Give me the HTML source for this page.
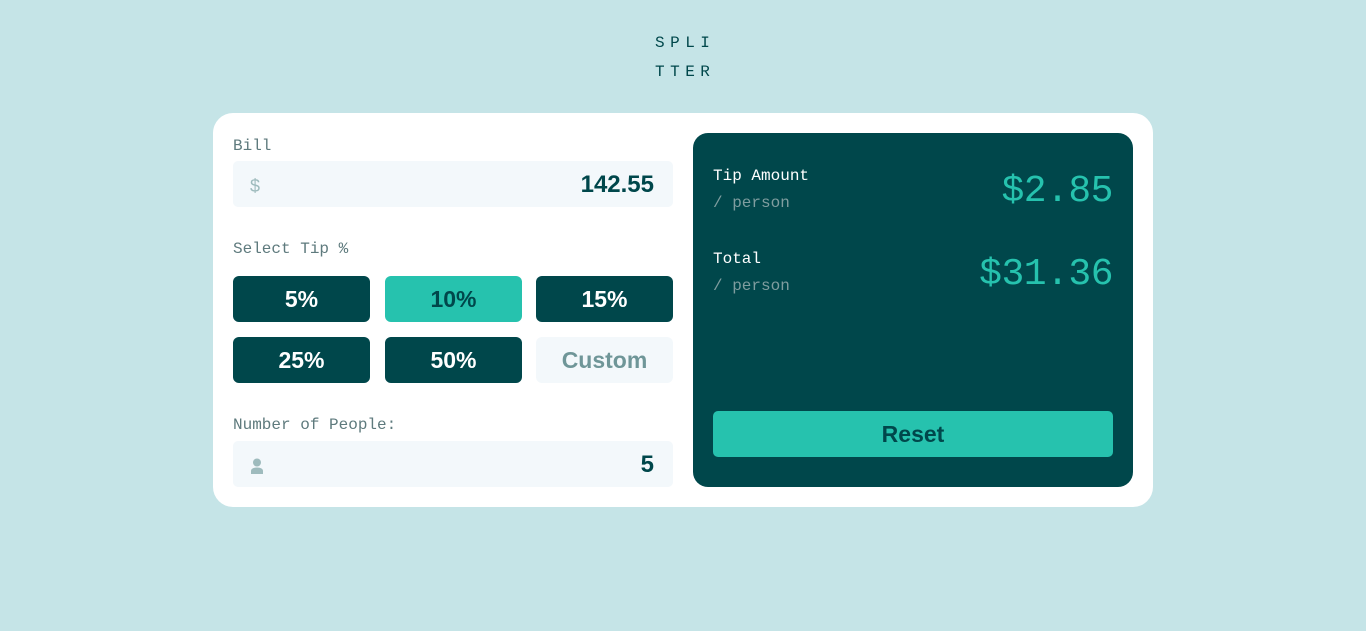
<!DOCTYPE html>
<html><head><style>
*{box-sizing:border-box;margin:0;padding:0}
body{width:1366px;height:631px;background:#c5e4e7;font-family:"Liberation Mono",monospace;position:relative;overflow:hidden}
.logo{position:absolute;left:655px;top:29px;font-size:16px;letter-spacing:5.5px;color:#00474b;line-height:29px;width:80px}
.card{position:absolute;left:213px;top:113px;width:940px;height:394px;background:#fff;border-radius:20px}
.lbl{position:absolute;left:20px;font-size:16px;color:#5e7a7d}
.inp{position:absolute;left:20px;width:440px;height:46px;background:#f3f8fb;border-radius:5px}
.val{position:absolute;right:19px;top:10px;font:bold 24px "Liberation Sans",sans-serif;color:#00474b}
.btn{position:absolute;width:137px;height:46px;border-radius:6px;background:#00474b;color:#fff;font:bold 23px "Liberation Sans",sans-serif;text-align:center;line-height:46px}
.res{position:absolute;left:480px;top:20px;width:440px;height:354px;background:#00474b;border-radius:15px}
.rl{position:absolute;left:20px;color:#fff;font-size:16px}
.rs{position:absolute;left:20px;color:#7f9d9f;font-size:16px}
.rv{position:absolute;right:20px;color:#26c2ae;font-size:38px;letter-spacing:-0.5px}
</style></head><body>
<div class="logo">SPLI<br>TTER</div>
<div class="card">
<div class="lbl" style="top:24px">Bill</div>
<div class="inp" style="top:48px"><span style="position:absolute;left:17px;top:15px;color:#9ebbbd;font:18px 'Liberation Sans',sans-serif">$</span><div class="val">142.55</div></div>
<div class="lbl" style="top:127px">Select Tip %</div>
<div class="btn" style="left:20px;top:163px">5%</div>
<div class="btn" style="left:172px;top:163px;background:#26c2ae;color:#00474b">10%</div>
<div class="btn" style="left:323px;top:163px">15%</div>
<div class="btn" style="left:20px;top:224px">25%</div>
<div class="btn" style="left:172px;top:224px">50%</div>
<div class="btn" style="left:323px;top:224px;background:#f3f8fb;color:#6f9698">Custom</div>
<div class="lbl" style="top:303px">Number of People:</div>
<div class="inp" style="top:328px"><svg style="position:absolute;left:17px;top:17px" width="14" height="17" viewBox="0 0 14 17"><circle cx="7" cy="4.5" r="4" fill="#9ebbbd"/><path d="M1 16v-3c0-2 2-3.5 6-3.5s6 1.5 6 3.5v3z" fill="#9ebbbd"/></svg><div class="val">5</div></div>
<div class="res">
<div class="rl" style="top:34px">Tip Amount</div>
<div class="rs" style="top:61px">/ person</div>
<div class="rv" style="top:37px">$2.85</div>
<div class="rl" style="top:117px">Total</div>
<div class="rs" style="top:144px">/ person</div>
<div class="rv" style="top:120px">$31.36</div>
<div style="position:absolute;left:20px;top:278px;width:400px;height:46px;background:#26c2ae;border-radius:5px;color:#00474b;font:bold 23px 'Liberation Sans',sans-serif;text-align:center;line-height:46px">Reset</div>
</div>
</div>
</body></html>
